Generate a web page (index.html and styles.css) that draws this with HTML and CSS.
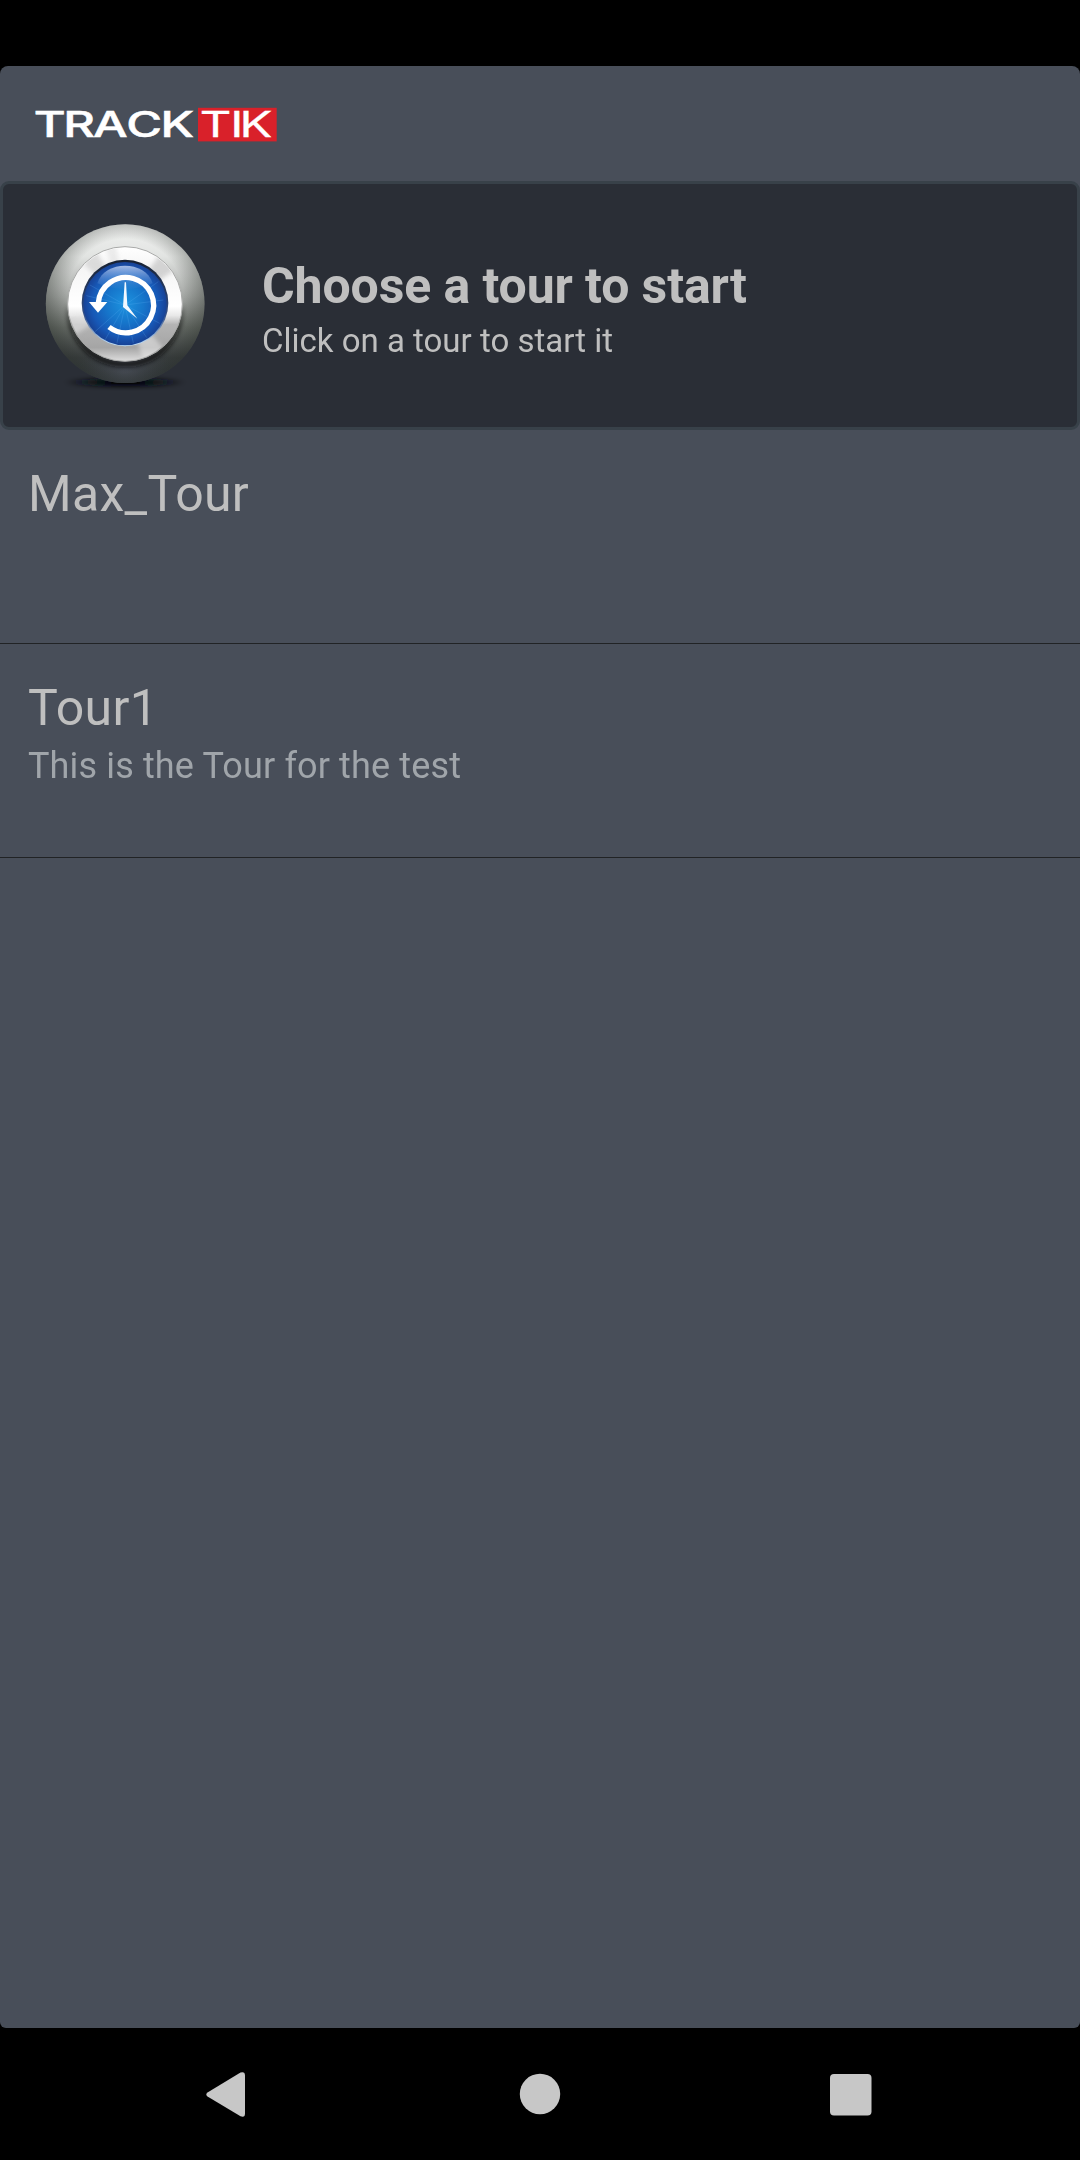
FILE: index.html
```html
<!DOCTYPE html>
<html lang="en">
<head>
<meta charset="utf-8">
<title>TrackTik</title>
<link rel="stylesheet" href="styles.css">
</head>
<body>
<div class="screen">
  <main class="app">
    <header class="topbar">
      <svg class="logo" width="246" height="40" viewBox="0 0 246 40" role="img" aria-label="TrackTik">
        <rect x="163" y="2.800" width="78.700" height="33.600" fill="#d9212a"/>
        <g fill="#fff" stroke="#fff">
          <text class="logo-track" transform="translate(0 32.4) scale(1.4 1)" x="-0.9 20.2 41.5 65.2 89.6">TRACK</text>
          <text class="logo-tik" transform="translate(0 32.4) scale(1.4 1)" x="117.7 139.4 146">TIK</text>
        </g>
      </svg>
    </header>
    <section class="banner">
      <svg class="clock" width="190" height="190" viewBox="0 0 570 570">
        <defs>
          <linearGradient id="ball" x1="0" y1="0" x2="0" y2="1">
            <stop offset="0" stop-color="#f0f1f0"/><stop offset=".2" stop-color="#e2e4e2"/>
            <stop offset=".45" stop-color="#a4a7a4"/><stop offset=".65" stop-color="#686d68"/>
            <stop offset=".84" stop-color="#3c4042"/><stop offset="1" stop-color="#343a40"/>
          </linearGradient>
          <radialGradient id="rim" cx=".5" cy=".46" r=".54">
            <stop offset=".68" stop-color="#252b25" stop-opacity="0"/>
            <stop offset="1" stop-color="#252b25" stop-opacity=".58"/>
          </radialGradient>
          <radialGradient id="low" cx=".5" cy=".9" r=".28">
            <stop offset="0" stop-color="#535866"/><stop offset="1" stop-color="#434751" stop-opacity="0"/>
          </radialGradient>
          <radialGradient id="ground">
            <stop offset="0" stop-color="#000"/><stop offset=".55" stop-color="#080a0c" stop-opacity=".9"/>
            <stop offset="1" stop-color="#101216" stop-opacity="0"/>
          </radialGradient>
          <linearGradient id="metal" x1="0" y1="0" x2="0" y2="1">
            <stop offset="0" stop-color="#fff"/><stop offset=".18" stop-color="#f5f5f5"/>
            <stop offset=".52" stop-color="#fff"/><stop offset=".6" stop-color="#e8e8e8"/>
            <stop offset=".68" stop-color="#b4b4b4"/><stop offset=".88" stop-color="#a5a5a5"/>
            <stop offset="1" stop-color="#dedede"/>
          </linearGradient>
          <radialGradient id="blue" cx=".5" cy=".5" r=".5">
            <stop offset="0" stop-color="#1d93df"/><stop offset=".45" stop-color="#1676cb"/>
            <stop offset=".8" stop-color="#1758b6"/><stop offset="1" stop-color="#174296"/>
          </radialGradient>
          <linearGradient id="gloss" x1="0" y1="0" x2="0" y2="1">
            <stop offset="0" stop-color="#d3e0fa" stop-opacity=".75"/><stop offset="1" stop-color="#5594e0" stop-opacity=".05"/>
          </linearGradient>
          <linearGradient id="well" x1="0" y1="0" x2="0" y2="1">
            <stop offset="0" stop-color="#17202f"/><stop offset=".65" stop-color="#32508a"/><stop offset="1" stop-color="#c6e7ff"/>
          </linearGradient>
          <clipPath id="ringclip"><circle cx="285" cy="282" r="169"/></clipPath>
          <filter id="soft" x="-20%" y="-20%" width="140%" height="140%"><feGaussianBlur stdDeviation="6"/></filter>
        </defs>
        <ellipse cx="285" cy="517" rx="185" ry="17" fill="url(#ground)" filter="url(#soft)"/>
        <circle cx="285.500" cy="281" r="238" fill="url(#ball)"/>
        <circle cx="285.500" cy="281" r="238" fill="url(#low)"/>
        <circle cx="285.500" cy="281" r="238" fill="url(#rim)" opacity=".8"/>
        <path d="M113 282a172 172 0 0 0 344 0l2 20a174 170 0 0 1-348 0z" fill="#111" filter="url(#soft)" opacity=".8"/>
        <circle cx="285" cy="282" r="172" fill="url(#metal)" stroke="#a9aaa9" stroke-width="3"/>
        <g clip-path="url(#ringclip)">
          <g filter="url(#soft)">
            <path d="M285 282L145 145L190 105z" fill="#c4c4c4" opacity=".55"/>
            <path d="M285 282L220 95L255 88z" fill="#ccc" opacity=".35"/>
            <path d="M285 282L395 125L440 175z" fill="#bcbcbc" opacity=".6"/>
            <path d="M285 282L110 330L125 380z" fill="#e2e2e2" opacity=".6"/>
            <path d="M285 282L345 465L410 425z" fill="#eee" opacity=".5"/>
          </g>
        </g>
        <circle cx="285" cy="279" r="130" fill="url(#well)"/>
        <circle cx="285" cy="281" r="125" fill="url(#blue)"/>
        <g stroke="#68b9fa" stroke-width="3" opacity=".2">
          <path d="M285 285L180 225M285 285L169 257M285 285L195 365M285 285L225 390M285 285L261 399M285 285L310 399M285 285L350 383M285 285L389 340M285 285L400 270M285 285L385 215"/>
        </g>
        <path d="M202 220C224 150 346 150 368 220Q285 255 202 220z" fill="url(#gloss)"/>
        <path d="M237 351A83 83 0 1 0 205 279" fill="none" stroke="#fff" stroke-width="16"/>
        <path d="M177 276H232L204 308z" fill="#fff"/>
        <path d="M284 217H288L292 286L322 326L279 291z" fill="#f2f9ff"/>
      </svg>
      <div class="banner-text">
        <h1 class="banner-title">Choose a tour to start</h1>
        <p class="banner-sub">Click on a tour to start it</p>
      </div>
    </section>
    <ul class="tours">
      <li class="tour"><h2 class="tour-name">Max_Tour</h2></li>
      <li class="tour"><h2 class="tour-name">Tour1</h2><p class="tour-desc">This is the Tour for the test</p></li>
    </ul>
  </main>
  <nav class="navbar">
    <svg class="nav-icon" width="60" height="60" viewBox="0 0 60 60"><path d="M7.500 28.500L40.500 8.500Q45 7 45 11.500V49.500Q45 54 40.500 52.300L7.500 32.500Q5 30.500 7.500 28.500Z"/></svg>
    <svg class="nav-icon" width="60" height="60" viewBox="0 0 60 60"><circle cx="30" cy="30" r="20.200"/></svg>
    <svg class="nav-icon" width="60" height="60" viewBox="0 0 60 60"><rect x="10" y="10" width="41.500" height="41.500" rx="4"/></svg>
  </nav>
</div>
</body>
</html>
```
FILE: styles.css
```css
* { box-sizing: border-box; }
body, h1, h2, p, ul { margin: 0; padding: 0; }
body { background: #000; font-family: Roboto, sans-serif; }

.screen {
  width: 1080px;
  height: 2160px;
  padding-top: 66px;
  display: flex;
  flex-direction: column;
  background: #000;
}
.app {
  flex: 1;
  background: #484e59;
  border-radius: 8px 8px 6px 6px;
}
.topbar { height: 115px; padding: 39px 35px; }
.logo { display: block; overflow: visible; }
.logo-track, .logo-tik { font-family: Inter, sans-serif; font-size: 35px; }
.logo-track { font-weight: 500; stroke-width: .5px; }
.logo-tik { font-weight: 400; stroke-width: .3px; }

.banner {
  display: flex;
  height: 249px;
  padding: 26px 27px;
  background: #2a2e36;
  border: 3px solid #384149;
  border-radius: 9px;
}
.clock { flex: none; }
.banner-text { padding: 43px 0 0 42px; color: #bfbfbf; }
.banner-title { font-size: 50px; line-height: 66px; font-weight: 700; letter-spacing: -.12px; }
.banner-sub { font-size: 33px; line-height: 44px; }

.tours { list-style: none; }
.tour {
  height: 214px;
  padding: 31px 28px 0;
  border-bottom: 1px solid #212325;
}
.tour-name { font-size: 50px; line-height: 66px; font-weight: 400; letter-spacing: .3px; color: #bfbfbf; }
.tour-desc { margin-top: 3px; font-size: 36px; line-height: 44px; letter-spacing: .14px; color: #a0a5aa; }

.navbar {
  display: flex;
  justify-content: space-between;
  height: 132px;
  padding: 36px 200px 0;
  fill: #c7c7c7;
}
.nav-icon { display: block; }
```
